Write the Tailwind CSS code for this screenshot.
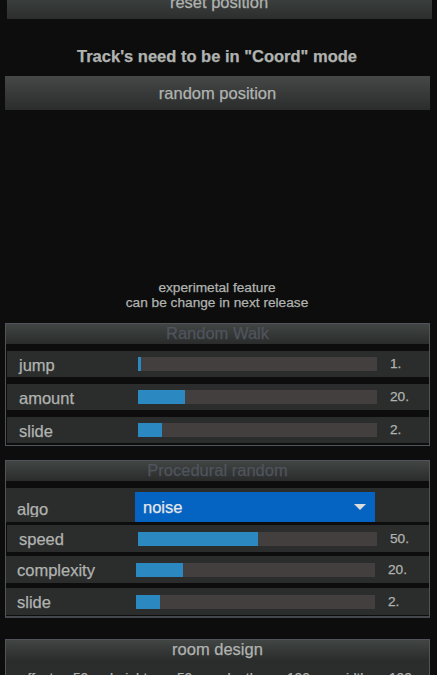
<!DOCTYPE html>
<html lang="en">
<head>
    <meta charset="UTF-8">
    <meta name="viewport" content="width=device-width, initial-scale=1.0">
    <title>Random position</title>
    <script src="https://cdn.jsdelivr.net/npm/@tailwindcss/browser@4"></script>
</head>
<body class="bg-[#0d0d0d] text-[#b0b3b0] font-['Liberation_Sans',Arial,sans-serif] text-[16.5px] leading-[18px] [-webkit-text-stroke:0.25px] w-[437px] h-[675px] overflow-hidden">

    <!-- Buttons -->
    <div class="h-[19px] ml-[7px] mr-[5px] overflow-hidden flex items-end justify-center bg-linear-to-b from-[#3a3e3c] to-[#2b2e2d]">
        <button class="w-full h-[34px] pr-[1px]">reset position</button>
    </div>
    <h1 class="mt-[28px] h-[29px] pr-[3px] text-center font-bold">Track's need to be in "Coord" mode</h1>
    <button class="block ml-[5px] w-[425px] h-[34px] bg-linear-to-b from-[#454847] to-[#2a2d2c]">random position</button>

    <p class="mt-[170px] h-[43px] pr-[3px] text-center text-[13.7px] leading-[15px]">experimetal feature<br>can be change in next release</p>

    <!-- Random Walk -->
    <section class="ml-[5px] w-[425px] h-[123px] border border-[#50535a]">
        <h2 class="h-5 text-center leading-[18px] text-[#50545d] bg-linear-to-b from-[#414544] to-[#292c2b]">Random Walk</h2>
        <div class="mt-[7px] ml-px h-[26px] flex items-center bg-[#2b2d2c]">
            <label class="w-[131px] pl-3 pt-px">jump</label>
            <div class="w-[239px] h-[14px] bg-[#433f3e]"><div class="h-full bg-[#2b88c1]" style="width: 3px"></div></div>
            <span class="ml-[13px] text-[13.7px]">1.</span>
        </div>
        <div class="mt-[7px] ml-px h-[26px] flex items-center bg-[#2b2d2c]">
            <label class="w-[131px] pl-3 pt-px">amount</label>
            <div class="w-[239px] h-[14px] bg-[#433f3e]"><div class="h-full bg-[#2b88c1]" style="width: 47px"></div></div>
            <span class="ml-[13px] text-[13.7px]">20.</span>
        </div>
        <div class="mt-[7px] ml-px h-[26px] flex items-center bg-[#2b2d2c]">
            <label class="w-[131px] pl-3 pt-px">slide</label>
            <div class="w-[239px] h-[14px] bg-[#433f3e]"><div class="h-full bg-[#2b88c1]" style="width: 24px"></div></div>
            <span class="ml-[13px] text-[13.7px]">2.</span>
        </div>
    </section>

    <!-- Procedural random -->
    <section class="mt-[14px] ml-[5px] w-[425px] h-[158px] border border-b-2 border-[#50535a] border-b-[#44474c]">
        <h2 class="h-5 text-center leading-[18px] text-[#50545d] bg-linear-to-b from-[#414544] to-[#292c2b]">Procedural random</h2>
        <div class="mt-[7px] h-[34px] flex items-end bg-[#2b2d2c]">
            <label class="w-[129px] h-[17px] mb-[5px] pl-[11px] leading-[18px] overflow-hidden">algo</label>
            <div class="w-[240px] h-[30px] pl-2 pr-[9px] flex items-center justify-between bg-[#0563c1] text-[#e6e8ea]">
                <span class="-mt-px">noise</span>
                <svg class="w-3 h-1.5" viewBox="0 0 12 6"><path d="M0 0h12L6 6z" fill="#dddddd"/></svg>
            </div>
        </div>
        <div class="mt-[3px] ml-px h-[27px] flex items-center bg-[#2b2d2c]">
            <label class="w-[131px] pl-3">speed</label>
            <div class="w-[239px] h-[14px] bg-[#433f3e]"><div class="h-full bg-[#2b88c1]" style="width: 120px"></div></div>
            <span class="ml-[13px] text-[13.7px]">50.</span>
        </div>
        <div class="mt-1 h-[27px] flex items-center bg-[#2b2d2c]">
            <label class="w-[130px] pl-[11px] pt-px">complexity</label>
            <div class="w-[239px] h-[14px] bg-[#433f3e]"><div class="h-full bg-[#2b88c1]" style="width: 47px"></div></div>
            <span class="ml-[13px] text-[13.7px]">20.</span>
        </div>
        <div class="mt-[5px] h-[27px] flex items-center bg-[#2b2d2c]">
            <label class="w-[130px] pl-[11px] pt-px">slide</label>
            <div class="w-[239px] h-[14px] bg-[#433f3e]"><div class="h-full bg-[#2b88c1]" style="width: 24px"></div></div>
            <span class="ml-[13px] text-[13.7px]">2.</span>
        </div>
    </section>

    <!-- Room design, runs off the bottom edge -->
    <section class="mt-[21px] ml-[5px] w-[425px] h-[60px] border border-[#50535a] bg-[#2b2d2c]">
        <h2 class="h-5 text-center leading-[18px] bg-linear-to-b from-[#414544] to-[#2b2d2c]">room design</h2>
        <div class="mt-[10px] pl-[14px] flex text-[13.7px] leading-[15px] whitespace-nowrap">
            <span class="w-[53px]">effect :</span><span class="w-[37px]">50</span>
            <span class="w-[67px]">height :</span><span class="w-[46px]">50</span>
            <span class="w-[64px]">depth :</span><span class="w-[49px]">100</span>
            <span class="w-[53px]">width :</span><span>100</span>
        </div>
    </section>

</body>
</html>
